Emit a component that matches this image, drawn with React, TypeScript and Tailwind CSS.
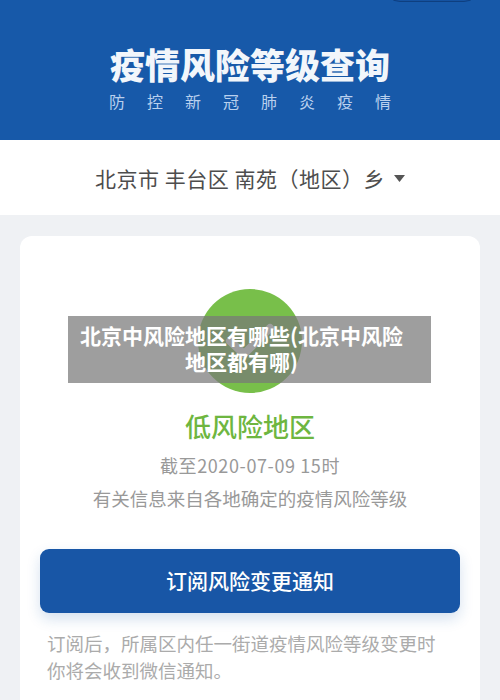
import React from 'react';

const FONT = { fontFamily: '"Noto Sans CJK SC", "Noto Sans", sans-serif' };

function CheckBadge() {
  return (
    <div className="w-[104px] h-[104px] rounded-full bg-[#78bf4a] flex items-center justify-center">
      <svg width="52" height="40" viewBox="0 0 52 40" fill="none">
        <path d="M6 20 L20 33 L46 7" stroke="#ffffff" strokeWidth="8" strokeLinecap="round" strokeLinejoin="round" />
      </svg>
    </div>
  );
}

export default function App() {
  return (
    <div className="relative w-[500px] h-[700px] overflow-hidden bg-[#eff1f4]" style={FONT}>
      {/* header */}
      <div className="relative h-[140px] bg-[#1759a9] flex flex-col items-center">
        <div className="absolute right-[20px] top-[-30px] w-[96px] h-[32px] rounded-full border border-[#0e3f80] bg-[#1552a0]" />
        <h1 className="mt-[43px] text-[35px] leading-[42px] font-black text-[#f2f6fb]">
          疫情风险等级查询
        </h1>
        <div className="mt-[6px] w-[282px] flex justify-between text-[16px] leading-[20px] text-[#b9d0ee]">
          {['防', '控', '新', '冠', '肺', '炎', '疫', '情'].map((c, i) => (
            <span key={i}>{c}</span>
          ))}
        </div>
      </div>

      {/* area picker */}
      <div className="h-[75px] bg-white flex items-center justify-center gap-[9px] pt-[2px]">
        <span className="text-[21px] text-[#4d4d4d] tracking-[0.5px]">北京市 丰台区 南苑（地区）乡</span>
        <svg width="11" height="7" viewBox="0 0 11 7">
          <path d="M0 0 H11 L5.5 7 Z" fill="#555" />
        </svg>
      </div>

      {/* result card */}
      <div className="mx-[20px] mt-[21px] bg-white rounded-[12px] flex flex-col items-center pt-[53px] pb-[30px]">
        <CheckBadge />
        <div className="mt-[16px] text-[26px] leading-[34px] font-medium text-[#6eb640]">低风险地区</div>
        <div className="mt-[10px] text-[18px] leading-[24px] tracking-[0.6px] text-[#999999]">截至2020-07-09 15时</div>
        <div className="mt-[9px] text-[18.5px] leading-[24px] text-[#999999]">有关信息来自各地确定的疫情风险等级</div>
        <button className="mt-[39px] w-[420px] h-[64px] rounded-[9px] bg-[#1856a6] text-white text-[21px] font-medium shadow-[0_6px_14px_rgba(24,86,166,0.18)]">
          订阅风险变更通知
        </button>
        <p className="mt-[17px] w-[420px] px-[7px] text-[18.5px] leading-[27px] text-[#ababab]">
          订阅后，所属区内任一街道疫情风险等级变更时
          <br />
          你将会收到微信通知。
        </p>
      </div>

      {/* caption banner */}
      <div className="absolute left-[68px] top-[316px] w-[363px] h-[67px] bg-[rgba(120,120,120,0.72)] flex flex-col items-center justify-center pr-[16px] pb-[4px]">
        <p className="text-white text-[21px] leading-[26px] font-bold text-center">
          北京中风险地区有哪些(北京中风险
          <br />
          地区都有哪)
        </p>
      </div>
    </div>
  );
}
